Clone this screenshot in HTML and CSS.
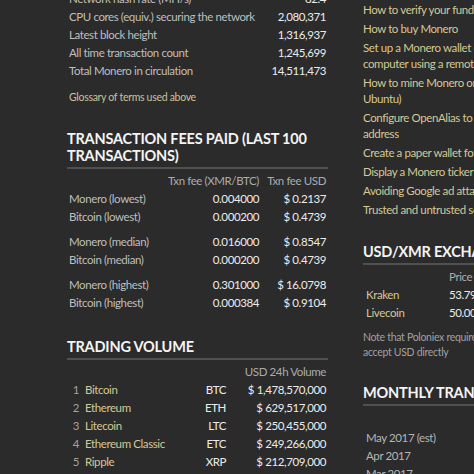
FILE: index.html
```html
<!DOCTYPE html>
<html lang="en">
<head>
<meta charset="utf-8">
<title>Monero statistics</title>
<link rel="stylesheet" href="styles.css">
</head>
<body>
<div class="page">
  <main class="main">
    <table class="stats">
      <tr><td>Network hash rate (MH/s)</td><td class="num">82.4</td></tr>
      <tr><td>CPU cores (equiv.) securing the network</td><td class="num">2,080,371</td></tr>
      <tr><td>Latest block height</td><td class="num">1,316,937</td></tr>
      <tr><td>All time transaction count</td><td class="num">1,245,699</td></tr>
      <tr><td>Total Monero in circulation</td><td class="num">14,511,473</td></tr>
    </table>
    <a class="glossary" href="#">Glossary of terms used above</a>

    <h2>Transaction fees paid (last 100 transactions)</h2>
    <table class="fees">
      <tr class="head"><td></td><td class="num c2">Txn fee (XMR/BTC)</td><td class="num c3">Txn fee USD</td></tr>
      <tr><td>Monero (lowest)</td><td class="num v">0.004000</td><td class="num v">$ 0.2137</td></tr>
      <tr><td>Bitcoin (lowest)</td><td class="num v">0.000200</td><td class="num v">$ 0.4739</td></tr>
      <tr class="group"><td>Monero (median)</td><td class="num v">0.016000</td><td class="num v">$ 0.8547</td></tr>
      <tr><td>Bitcoin (median)</td><td class="num v">0.000200</td><td class="num v">$ 0.4739</td></tr>
      <tr class="group"><td>Monero (highest)</td><td class="num v">0.301000</td><td class="num v">$ 16.0798</td></tr>
      <tr><td>Bitcoin (highest)</td><td class="num v">0.000384</td><td class="num v">$ 0.9104</td></tr>
    </table>

    <h2>Trading volume</h2>
    <table class="volume">
      <tr class="head"><td class="rank"></td><td></td><td class="sym"></td><td class="num vol">USD 24h Volume</td></tr>
      <tr><td class="rank">1</td><td><a href="#">Bitcoin</a></td><td class="sym">BTC</td><td class="num v">$ 1,478,570,000</td></tr>
      <tr><td class="rank">2</td><td><a href="#">Ethereum</a></td><td class="sym">ETH</td><td class="num v">$ 629,517,000</td></tr>
      <tr><td class="rank">3</td><td><a href="#">Litecoin</a></td><td class="sym">LTC</td><td class="num v">$ 250,455,000</td></tr>
      <tr><td class="rank">4</td><td><a href="#">Ethereum Classic</a></td><td class="sym">ETC</td><td class="num v">$ 249,266,000</td></tr>
      <tr><td class="rank">5</td><td><a href="#">Ripple</a></td><td class="sym">XRP</td><td class="num v">$ 212,709,000</td></tr>
    </table>
  </main>

  <aside class="side">
    <ul class="guides">
      <li><a href="#">How to verify your funds are safe</a></li>
      <li><a href="#">How to buy Monero</a></li>
      <li><a href="#">Set up a Monero wallet on your own computer using a remote node</a></li>
      <li><a href="#">How to mine Monero on Linux (Debian / Ubuntu)</a></li>
      <li><a href="#">Configure OpenAlias to simplify your address</a></li>
      <li><a href="#">Create a paper wallet for Monero</a></li>
      <li><a href="#">Display a Monero ticker on your site</a></li>
      <li><a href="#">Avoiding Google ad attacks</a></li>
      <li><a href="#">Trusted and untrusted sources</a></li>
    </ul>

    <h2>USD/XMR exchange rates</h2>
    <table class="rates">
      <tr class="head"><td class="ex"></td><td>Price</td><td>24h Volume</td></tr>
      <tr><td class="ex"><a href="#">Kraken</a></td><td class="v">53.7900</td><td class="v">1,204,332</td></tr>
      <tr><td class="ex"><a href="#">Livecoin</a></td><td class="v">50.0000</td><td class="v">12,044</td></tr>
    </table>
    <p class="note">Note that Poloniex requires Bitcoin and does not accept USD directly</p>

    <h2 class="monthly-title">Monthly transactions</h2>
    <table class="monthly">
      <tr class="head"><td class="month"></td><td>Transactions</td><td>Fees</td></tr>
      <tr><td class="month">May 2017 (est)</td><td class="v">120,000</td><td class="v">310</td></tr>
      <tr><td class="month">Apr 2017</td><td class="v">98,000</td><td class="v">280</td></tr>
      <tr><td class="month">Mar 2017</td><td class="v">85,000</td><td class="v">240</td></tr>
    </table>
  </aside>
</div>
</body>
</html>
```

FILE: styles.css
```css
html, body {
  margin: 0;
  padding: 0;
  overflow: hidden;
  background: #2b2b2b;
}

body {
  font-family: Lato, "Liberation Sans", sans-serif;
  font-size: 11.5px;
  letter-spacing: -0.4px;
  color: #bfbfbf;
}

a {
  color: #d4c895;
  text-decoration: none;
}

.page {
  display: flex;
  align-items: flex-start;
  gap: 35px;
  padding-left: 67px;
  margin-top: -10px;
  width: 800px;
}

.main {
  width: 261px;
  flex: none;
}

.side {
  width: 270px;
  flex: none;
  padding-top: 12px;
}

table {
  width: 100%;
  border-collapse: collapse;
}

td {
  padding: 0 2px;
  line-height: 18px;
  white-space: nowrap;
}

.num {
  text-align: right;
}

.v {
  color: #ebebeb;
}

.stats .num {
  color: #ebebeb;
}

.glossary {
  display: block;
  margin: 10px 0 0 2px;
  font-size: 10.5px;
  letter-spacing: -0.3px;
  line-height: 14px;
  color: #cbc198;
}

h2 {
  margin: 26px 0 0;
  padding-bottom: 3px;
  border-bottom: 2px solid #505050;
  font-size: 14.5px;
  letter-spacing: -0.2px;
  line-height: 17px;
  font-weight: 700;
  text-transform: uppercase;
  color: #f4f4f4;
}

h2 + table {
  margin-top: 3px;
}

.head td {
  color: #ababab;
}

.fees .c2 {
  width: 92px;
}

.fees .c3 {
  width: 63px;
}

.fees .group td {
  padding-top: 7px;
}

.volume .rank {
  width: 10px;
  text-align: right;
  padding-right: 4px;
  color: #a2a2a2;
}

.volume .sym {
  text-align: right;
  color: #ebebeb;
}

.volume .vol {
  width: 96px;
}

.guides {
  list-style: none;
  margin: 0;
  padding: 0;
  width: 190px;
}

.guides li {
  line-height: 16px;
  margin-bottom: 3px;
}

.side h2 {
  margin-top: 25px;
}

.side .monthly-title {
  margin-top: 24px;
}

.rates td,
.monthly td {
  padding: 0 3px;
}

.rates .ex {
  width: 77px;
}

.note {
  margin: 8px 0 0;
  width: 230px;
  font-size: 10.5px;
  letter-spacing: -0.3px;
  line-height: 15px;
  color: #a0a0a0;
}

.monthly .month {
  width: 120px;
  color: #b5b5b5;
}

.monthly .head td {
  line-height: 20px;
}
```
